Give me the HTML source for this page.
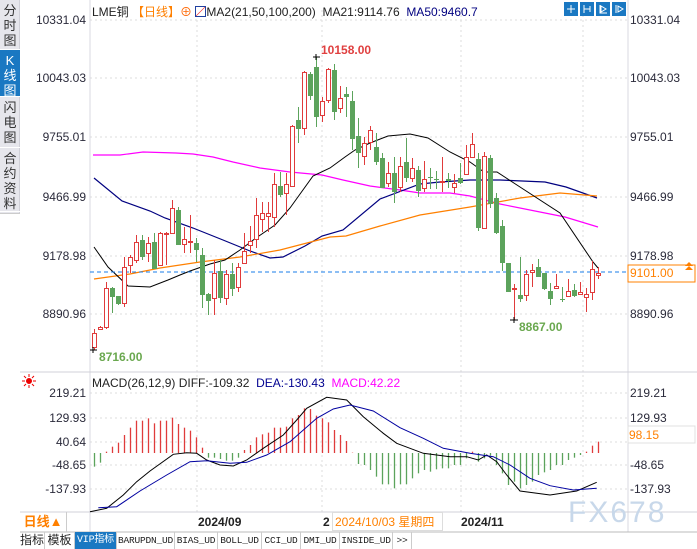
<!DOCTYPE html>
<html><head><meta charset="utf-8">
<style>
*{margin:0;padding:0;box-sizing:border-box}
body{width:697px;height:549px;overflow:hidden;background:#fff;font-family:"Liberation Sans","Noto Sans CJK SC",sans-serif;font-size:12px;color:#222;position:relative}
.abs{position:absolute;white-space:nowrap}
.side{position:absolute;left:0;top:0;width:20px;height:532px;background:#e6e6ec;border-right:1px solid #d0d0d8}
.tab{position:absolute;left:0;width:20px;font-size:13px;line-height:15px;text-align:center;color:#333;border-bottom:1px solid #fff;padding-top:3px}
.yl{position:absolute;font-size:12px;color:#2a2a3a}
.bt{position:absolute;top:532px;height:17px;line-height:17px;font-size:12px;text-align:center;border-right:1px solid #ccc;color:#222;overflow:hidden;white-space:nowrap}
.mono{font-family:"Liberation Mono",monospace;font-size:9.5px;letter-spacing:-0.2px}
</style></head><body>
<div class="side">
<div class="tab" style="top:0;height:50px">分<br>时<br>图</div>
<div class="tab" style="top:50px;height:47px;background:#1a78c2;color:#fff">K<br>线<br>图</div>
<div class="tab" style="top:97px;height:51px">闪<br>电<br>图</div>
<div class="tab" style="top:148px;height:64px">合<br>约<br>资<br>料</div>
<div style="position:absolute;top:213px;left:0;width:20px;height:320px;background:#fff;border-top:1px solid #ccc"></div>
</div>
<svg class="abs" style="left:0;top:0" width="697" height="549" id="sv">
<g stroke="#ddd" stroke-dasharray="2,3" stroke-width="1">
<line x1="90" y1="20" x2="628" y2="20"/><line x1="90" y1="78" x2="628" y2="78"/><line x1="90" y1="137" x2="628" y2="137"/><line x1="90" y1="197" x2="628" y2="197"/><line x1="90" y1="256" x2="628" y2="256"/><line x1="90" y1="314" x2="628" y2="314"/>
<line x1="90" y1="393" x2="628" y2="393"/><line x1="90" y1="418" x2="628" y2="418"/><line x1="90" y1="442" x2="628" y2="442"/><line x1="90" y1="465" x2="628" y2="465"/><line x1="90" y1="489" x2="628" y2="489"/>
<line x1="197" y1="10" x2="197" y2="512"/><line x1="322" y1="10" x2="322" y2="512"/><line x1="461" y1="10" x2="461" y2="512"/><line x1="583" y1="10" x2="583" y2="512"/>
</g>
<line x1="90" y1="0" x2="90" y2="532" stroke="#d8d8e0"/>
<line x1="628" y1="0" x2="628" y2="532" stroke="#d8d8e0"/>
<line x1="20" y1="372" x2="697" y2="372" stroke="#d0d0d8"/>
<line x1="20" y1="512" x2="697" y2="512" stroke="#d0d0d8"/>
<line x1="20" y1="532" x2="697" y2="532" stroke="#bbb"/>
<g fill="none" stroke-width="1.2">
<polyline stroke="#ff00ff" points="93,155 120,155 143,152 176,153 193,154 213,157 233,162 260,168 290,172 322,175 343,180 370,186 400,190 420,193 450,193 470,196 500,204 540,212 565,217 598,227"/>
<polyline stroke="#000080" points="94,178 122,201 150,211 165,218 193,228 223,240 250,251 270,258 283,257 305,246 322,236 343,230 380,199 420,184 440,182 470,180 500,180 545,182 566,187 597,198"/>
<polyline stroke="#ff8000" points="94,279 130,274 160,268 200,262 240,257 280,250 330,237 346,236 380,226 420,215 470,207 520,198 560,193 597,196"/>
<polyline stroke="#000" stroke-width="1" points="94,247 108,267 128,286 150,287 168,280 180,275 190,271 210,264 225,260 240,250 256,238 275,225 290,208 313,176 330,168 345,157 355,150 370,143 388,136 410,134 428,138 450,152 470,162 484,172 497,172 520,187 560,213 593,262 598,268"/>
</g>
<line x1="90" y1="272" x2="628" y2="272" stroke="#1a7ee8" stroke-dasharray="4,3"/>
<g id="cd"></g>
<g stroke="#000" stroke-width="1"><path d="M313 57h7M316 54v6M90 350h7M93 347v6M510 320h8M514 317v6"/></g>
<g id="hist"></g>
<g fill="none" stroke-width="1">
<polyline id="diff" stroke="#000"/>
<polyline id="dea" stroke="#0000a0"/>
</g>
<rect x="628" y="265" width="67" height="17" fill="#fff" stroke="#ff8000"/>
<path d="M689 262l4 4h-8z M689 266l4 4h-8z" fill="#ff8000"/>
<rect x="628" y="426" width="67" height="17" fill="#fff" stroke="#e0e0e0"/>
<g fill="#1a78c2"><rect x="564" y="2" width="14" height="14"/><rect x="580" y="2" width="14" height="14"/><rect x="596" y="2" width="14" height="14"/><rect x="612" y="2" width="14" height="14"/></g>
<g stroke="#fff" fill="none"><path d="M571 5v8M567 9h8"/><path d="M584 5v8M584 9h6M590 6v6"/><path d="M600 5v8h7M601 6l5 3-5 3z"/><path d="M616 5v8M618 6l5 3-5 3z"/></g>
<g stroke="#e00" stroke-width="1"><circle cx="29" cy="381" r="2.5" fill="#e00"/><path d="M29 374v3M29 385v3M22 381h3M33 381h3M24 376l2 2M32 384l2 2M34 376l-2 2M24 386l2-2"/></g>
</svg>
<div class="abs" style="left:92px;top:3px;font-size:12px">LME铜 <span style="color:#ff8000">【日线】</span><span style="color:#f60">⊕</span> <span style="display:inline-block;width:11px;height:11px;border:1px solid #2040a0;vertical-align:-1px;background:linear-gradient(135deg,#fff 45%,#e33 50%,#fff 55%)"></span>MA2(21,50,100,200) &nbsp;MA21:9114.76 &nbsp;<span style="color:#000080">MA50:9460.7</span></div>
<div class="yl" style="right:611px;top:13px">10331.04</div>
<div class="yl" style="right:611px;top:71px">10043.03</div>
<div class="yl" style="right:611px;top:130px">9755.01</div>
<div class="yl" style="right:611px;top:190px">9466.99</div>
<div class="yl" style="right:611px;top:249px">9178.98</div>
<div class="yl" style="right:611px;top:307px">8890.96</div>
<div class="yl" style="left:630px;top:13px">10331.04</div>
<div class="yl" style="left:630px;top:71px">10043.03</div>
<div class="yl" style="left:630px;top:130px">9755.01</div>
<div class="yl" style="left:630px;top:190px">9466.99</div>
<div class="yl" style="left:630px;top:249px">9178.98</div>
<div class="yl" style="left:630px;top:307px">8890.96</div>
<div class="yl" style="left:630px;top:266px;color:#ff8000">9101.00</div>
<div class="abs" style="left:321px;top:43px;color:#e04040;font-weight:bold">10158.00</div>
<div class="abs" style="left:99px;top:350px;color:#6aa84f;font-weight:bold">8716.00</div>
<div class="abs" style="left:519px;top:320px;color:#6aa84f;font-weight:bold">8867.00</div>
<div class="abs" style="left:92px;top:376px">MACD(26,12,9) DIFF:-109.32 &nbsp;<span style="color:#000090">DEA:-130.43</span> &nbsp;<span style="color:#ff00ff">MACD:42.22</span></div>
<div class="yl" style="right:611px;top:386px">219.21</div>
<div class="yl" style="right:611px;top:411px">129.93</div>
<div class="yl" style="right:611px;top:435px">40.64</div>
<div class="yl" style="right:611px;top:458px">-48.65</div>
<div class="yl" style="right:611px;top:482px">-137.93</div>
<div class="yl" style="left:630px;top:386px">219.21</div>
<div class="yl" style="left:630px;top:411px">129.93</div>
<div class="yl" style="left:630px;top:458px">-48.65</div>
<div class="yl" style="left:630px;top:482px">-137.93</div>
<div class="yl" style="left:629px;top:428px;color:#ff8000">98.15</div>
<div class="abs" style="left:568px;top:496px;font-size:30px;color:#c8d8ea;letter-spacing:2px">FX678</div>
<div class="abs" style="left:20px;top:512px;width:47px;height:20px;border-right:1px solid #ccc;color:#ff8000;font-size:13px;line-height:20px;text-align:center;font-weight:bold">日线▲</div>
<div class="abs" style="left:198px;top:515px;font-weight:bold">2024/09</div>
<div class="abs" style="left:323px;top:515px;font-weight:bold">2</div>
<div class="abs" style="left:332px;top:512px;width:111px;height:19px;border:1px solid #ddd;background:#fff;color:#ff8000;line-height:18px;padding-left:2px">2024/10/03 星期四</div>
<div class="abs" style="left:461px;top:515px;font-weight:bold">2024/11</div>
<div class="bt" style="left:20px;width:25px">指标</div>
<div class="bt" style="left:45px;width:30px">模板</div>
<div class="bt mono" style="left:75px;width:42px;background:#1a78c2;color:#fff;font-size:10px">VIP指标</div>
<div class="bt mono" style="left:117px;width:58px">BARUPDN_UD</div>
<div class="bt mono" style="left:175px;width:43px">BIAS_UD</div>
<div class="bt mono" style="left:218px;width:44px">BOLL_UD</div>
<div class="bt mono" style="left:262px;width:39px">CCI_UD</div>
<div class="bt mono" style="left:301px;width:39px">DMI_UD</div>
<div class="bt mono" style="left:340px;width:53px">INSIDE_UD</div>
<div class="bt mono" style="left:393px;width:19px">&gt;&gt;</div>
<script>
var C=[[94,333,347,329,350,1],[100,327,329,326,330,1],[106,288,327,282,329,1],[112,288,297,287,313,0],[118,296,304,296,305,0],[124,267,303,257,307,1],[130,257,265,255,273,1],[136,242,260,235,263,1],[142,240,257,235,260,0],[148,243,253,237,262,1],[154,242,269,233,269,0],[160,233,265,232,266,1],[166,233,234,232,265,1],[172,208,233,200,233,1],[178,210,245,207,245,0],[184,239,244,227,253,1],[190,241,242,215,253,1],[196,243,250,238,262,0],[202,255,295,248,308,0],[208,294,301,293,315,0],[214,273,298,260,315,1],[220,271,298,260,303,0],[226,274,298,270,305,1],[232,274,289,263,296,0],[238,267,287,263,292,1],[244,251,263,233,264,1],[250,241,245,226,253,1],[256,215,239,198,248,1],[262,213,219,202,232,1],[268,213,216,202,232,1],[274,184,217,173,227,1],[280,186,195,172,197,0],[286,184,193,173,215,1],[292,126,186,125,187,1],[298,120,129,107,143,0],[304,72,128,71,135,1],[310,74,96,72,100,0],[316,67,117,57,127,0],[322,101,115,97,122,1],[328,69,100,68,103,1],[334,70,112,64,120,0],[340,98,108,86,113,1],[346,94,97,87,117,0],[352,101,139,91,150,0],[358,136,153,118,168,0],[364,143,156,137,165,1],[370,130,142,126,150,1],[376,147,162,133,165,0],[382,158,188,153,188,0],[388,173,183,162,187,1],[394,173,192,157,203,0],[400,166,187,157,192,1],[406,162,178,138,182,0],[412,168,178,158,182,1],[418,170,191,166,197,0],[424,179,188,161,192,1],[430,177,178,168,189,0],[436,179,180,171,189,0],[442,181,182,157,192,1],[448,179,181,173,188,0],[454,183,187,174,193,1],[460,178,183,163,184,0],[466,157,174,145,175,1],[472,144,157,133,158,1],[478,159,228,153,231,0],[484,156,228,152,229,1],[490,158,204,155,208,0],[496,198,233,193,234,0],[502,226,263,220,271,0],[508,263,292,263,292,0],[514,288,289,284,320,1],[520,295,299,257,302,0],[526,274,295,270,301,1],[532,270,272,264,287,1],[538,267,277,259,277,0],[544,273,289,273,290,0],[550,291,299,283,305,0],[556,286,288,274,288,1],[562,299,300,287,302,0],[568,291,296,279,297,1],[574,290,296,284,297,0],[580,292,294,282,295,1],[586,294,297,288,312,1],[592,269,292,261,300,1],[598,273,275,267,279,1]];
var s="";C.forEach(function(c){var col=c[5]?"#e03b3b":"#5ca35c";
s+='<line x1="'+(c[0]+.5)+'" y1="'+c[3]+'" x2="'+(c[0]+.5)+'" y2="'+c[4]+'" stroke="'+col+'"/>';
var h=Math.max(1,c[2]-c[1]);
if(c[5])s+='<rect x="'+(c[0]-1.5)+'" y="'+(c[1]+.5)+'" width="4" height="'+h+'" fill="#fff" stroke="'+col+'"/>';
else s+='<rect x="'+(c[0]-2)+'" y="'+c[1]+'" width="5" height="'+h+'" fill="'+col+'"/>';});
document.getElementById("cd").innerHTML=s;
var H=[245,233,200,185,173,150,128,107,107,100,115,107,107,98,117,128,137,157,188,218,218,222,227,227,218,195,180,157,148,143,128,128,125,100,90,70,72,92,100,112,135,150,168,203,237,240,255,275,298,298,310,298,298,280,265,255,260,253,250,250,240,240,220,200,230,220,212,240,265,300,290,310,300,290,270,262,255,240,240,225,218,210,200,182,170];
var z=453,t="";H.forEach(function(v,i){var x=94+i*6+.5,y=385+v/3;t+='<line x1="'+x+'" y1="'+z+'" x2="'+x+'" y2="'+y+'" stroke="'+(v<205?"#e03b3b":"#5ca35c")+'" stroke-width="1.3"/>';});
document.getElementById("hist").innerHTML=t;
function P(a){var r=[];for(var i=0;i<a.length;i+=2)r.push((90+a[i]/3).toFixed(1)+","+(385+a[i+1]/3).toFixed(1));return r.join(" ");}
document.getElementById("diff").setAttribute("points",P([0,380,50,370,100,330,140,290,180,258,250,208,290,203,320,205,350,225,390,240,430,243,470,225,520,190,580,150,620,105,650,70,710,37,770,45,820,95,880,145,920,175,1000,205,1080,215,1130,215,1165,225,1190,210,1220,230,1250,270,1290,318,1380,330,1460,318,1520,292]));
document.getElementById("dea").setAttribute("points",P([25,368,80,365,150,318,230,270,300,230,350,227,420,235,470,232,530,210,600,170,680,100,730,72,780,60,850,78,930,128,1000,160,1060,190,1140,205,1210,215,1260,240,1320,280,1380,302,1450,315,1520,310]));
</script>
</body></html>
